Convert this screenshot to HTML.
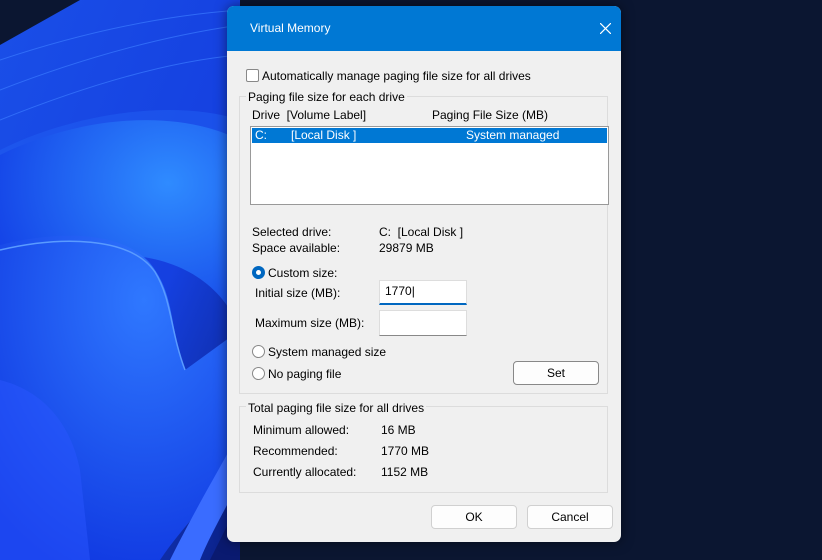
<!DOCTYPE html>
<html><head><style>
body{margin:0;width:822px;height:560px;overflow:hidden;position:relative;font-family:"Liberation Sans",sans-serif;font-size:12px;color:#000;background:#0b1631}
.a{position:absolute;white-space:nowrap}
.dlg{position:absolute;left:227px;top:6px;width:394px;height:536px;background:#f0f0f0;border-radius:7px;overflow:hidden;box-shadow:0 0 12px rgba(0,0,0,.5)}
.tb{position:absolute;left:0;top:0;width:394px;height:45px;background:#0078d4;color:#fff}
.grp{position:absolute;border:1px solid #dcdcdc;}
.btn{position:absolute;background:#fdfdfd;border:1px solid #d0d0d0;border-radius:4px;text-align:center;line-height:22px}
.rad{position:absolute;width:11px;height:11px;border:1px solid #888;border-radius:50%;background:#fff}
.inp{position:absolute;background:#fff;border:1px solid #ddd;border-bottom:1px solid #888}
</style></head><body>
<svg class="a" style="left:0;top:0" width="822" height="560">
<defs>
<linearGradient id="b0" x1="0" y1="0" x2="1" y2="1"><stop offset="0" stop-color="#1a4fe8"/><stop offset="0.6" stop-color="#1540e0"/><stop offset="1" stop-color="#0a1f80"/></linearGradient>
<radialGradient id="b1" cx="0.7" cy="0.3" r="0.8"><stop offset="0" stop-color="#2f8bff"/><stop offset="1" stop-color="#1340e6"/></radialGradient>
<radialGradient id="b2" cx="0.6" cy="0.2" r="0.9"><stop offset="0" stop-color="#2f78ff"/><stop offset="1" stop-color="#0f36e0"/></radialGradient>
</defs>
<rect width="822" height="560" fill="#0b1631"/>
<path d="M80 0 L240 0 L240 560 L0 560 L0 45Z" fill="url(#b0)"/>
<path d="M0 150 C80 110 180 100 240 120 L240 300 C200 200 80 200 0 260Z" fill="#1f5cf0" opacity=".6"/>
<path d="M0 155 C70 120 170 105 240 140 L240 330 C210 250 100 230 0 290Z" fill="url(#b1)"/>
<path d="M0 245 C60 230 130 230 155 270 C175 300 170 330 185 370 L240 330 L240 460 C210 500 180 530 160 560 L0 560Z" fill="url(#b2)"/>
<path d="M0 250 C60 236 130 236 155 272 C172 300 170 330 185 370" stroke="#5a9bff" stroke-width="1.5" fill="none"/>
<path d="M170 560 C200 500 225 460 240 430 L240 480 C225 510 210 535 200 560Z" fill="#3a6cff"/>
<path d="M210 560 C225 530 235 510 240 500 L240 560Z" fill="#0a1a70"/>
<path d="M0 380 C40 390 70 420 80 470 L90 560 L0 560Z" fill="#2a55ff" opacity=".5"/>
<path d="M0 60 C90 30 170 15 240 10 M0 90 C90 55 170 35 240 25 M0 120 C100 80 180 60 240 55" stroke="#3a7bff" stroke-width="1" fill="none" opacity=".7"/>
</svg>
<div class="dlg">
<div class="tb"><span class="a" style="left:23px;top:15px;font-size:12px">Virtual Memory</span>
<svg class="a" style="left:373px;top:17px" width="11" height="11"><path d="M0 0L11 11M11 0L0 11" stroke="#fff" stroke-width="1.2"/></svg></div>
<div class="a" style="left:19px;top:63px;width:11px;height:11px;border:1px solid #888;background:#fff;border-radius:2px"></div>
<span class="a" style="left:35px;top:63px">Automatically manage paging file size for all drives</span>
<div class="grp" style="left:12px;top:90px;width:367px;height:296px"></div>
<span class="a" style="left:19px;top:84px;background:#f0f0f0;padding:0 2px">Paging file size for each drive</span>
<span class="a" style="left:25px;top:102px">Drive&nbsp; [Volume Label]</span>
<span class="a" style="left:205px;top:102px">Paging File Size (MB)</span>
<div class="a" style="left:23px;top:120px;width:357px;height:77px;background:#fff;border:1px solid #999"></div>
<div class="a" style="left:25px;top:122px;width:355px;height:15px;background:#0078d4;color:#fff">
<span class="a" style="left:3px;top:0">C:</span><span class="a" style="left:39px;top:0">[Local Disk ]</span><span class="a" style="left:214px;top:0">System managed</span></div>
<span class="a" style="left:25px;top:219px">Selected drive:</span><span class="a" style="left:152px;top:219px">C:&nbsp; [Local Disk ]</span>
<span class="a" style="left:25px;top:235px">Space available:</span><span class="a" style="left:152px;top:235px">29879 MB</span>
<div class="rad" style="left:25px;top:260px;border:4px solid #0067c0;width:5px;height:5px"></div>
<span class="a" style="left:41px;top:260px">Custom size:</span>
<span class="a" style="left:28px;top:280px">Initial size (MB):</span>
<div class="inp" style="left:152px;top:274px;width:86px;height:22px;border-bottom:2px solid #0067c0"></div>
<span class="a" style="left:158px;top:278px">1770|</span>
<span class="a" style="left:28px;top:310px">Maximum size (MB):</span>
<div class="inp" style="left:152px;top:304px;width:86px;height:24px"></div>
<div class="rad" style="left:25px;top:339px"></div><span class="a" style="left:41px;top:339px">System managed size</span>
<div class="rad" style="left:25px;top:361px"></div><span class="a" style="left:41px;top:361px">No paging file</span>
<div class="btn" style="left:286px;top:355px;width:84px;height:22px;border-color:#888">Set</div>
<div class="grp" style="left:12px;top:400px;width:367px;height:85px"></div>
<span class="a" style="left:19px;top:395px;background:#f0f0f0;padding:0 2px">Total paging file size for all drives</span>
<span class="a" style="left:26px;top:417px">Minimum allowed:</span><span class="a" style="left:154px;top:417px">16 MB</span>
<span class="a" style="left:26px;top:438px">Recommended:</span><span class="a" style="left:154px;top:438px">1770 MB</span>
<span class="a" style="left:26px;top:459px">Currently allocated:</span><span class="a" style="left:154px;top:459px">1152 MB</span>
<div class="btn" style="left:204px;top:499px;width:84px;height:22px">OK</div>
<div class="btn" style="left:300px;top:499px;width:84px;height:22px">Cancel</div>
</div>
</body></html>
